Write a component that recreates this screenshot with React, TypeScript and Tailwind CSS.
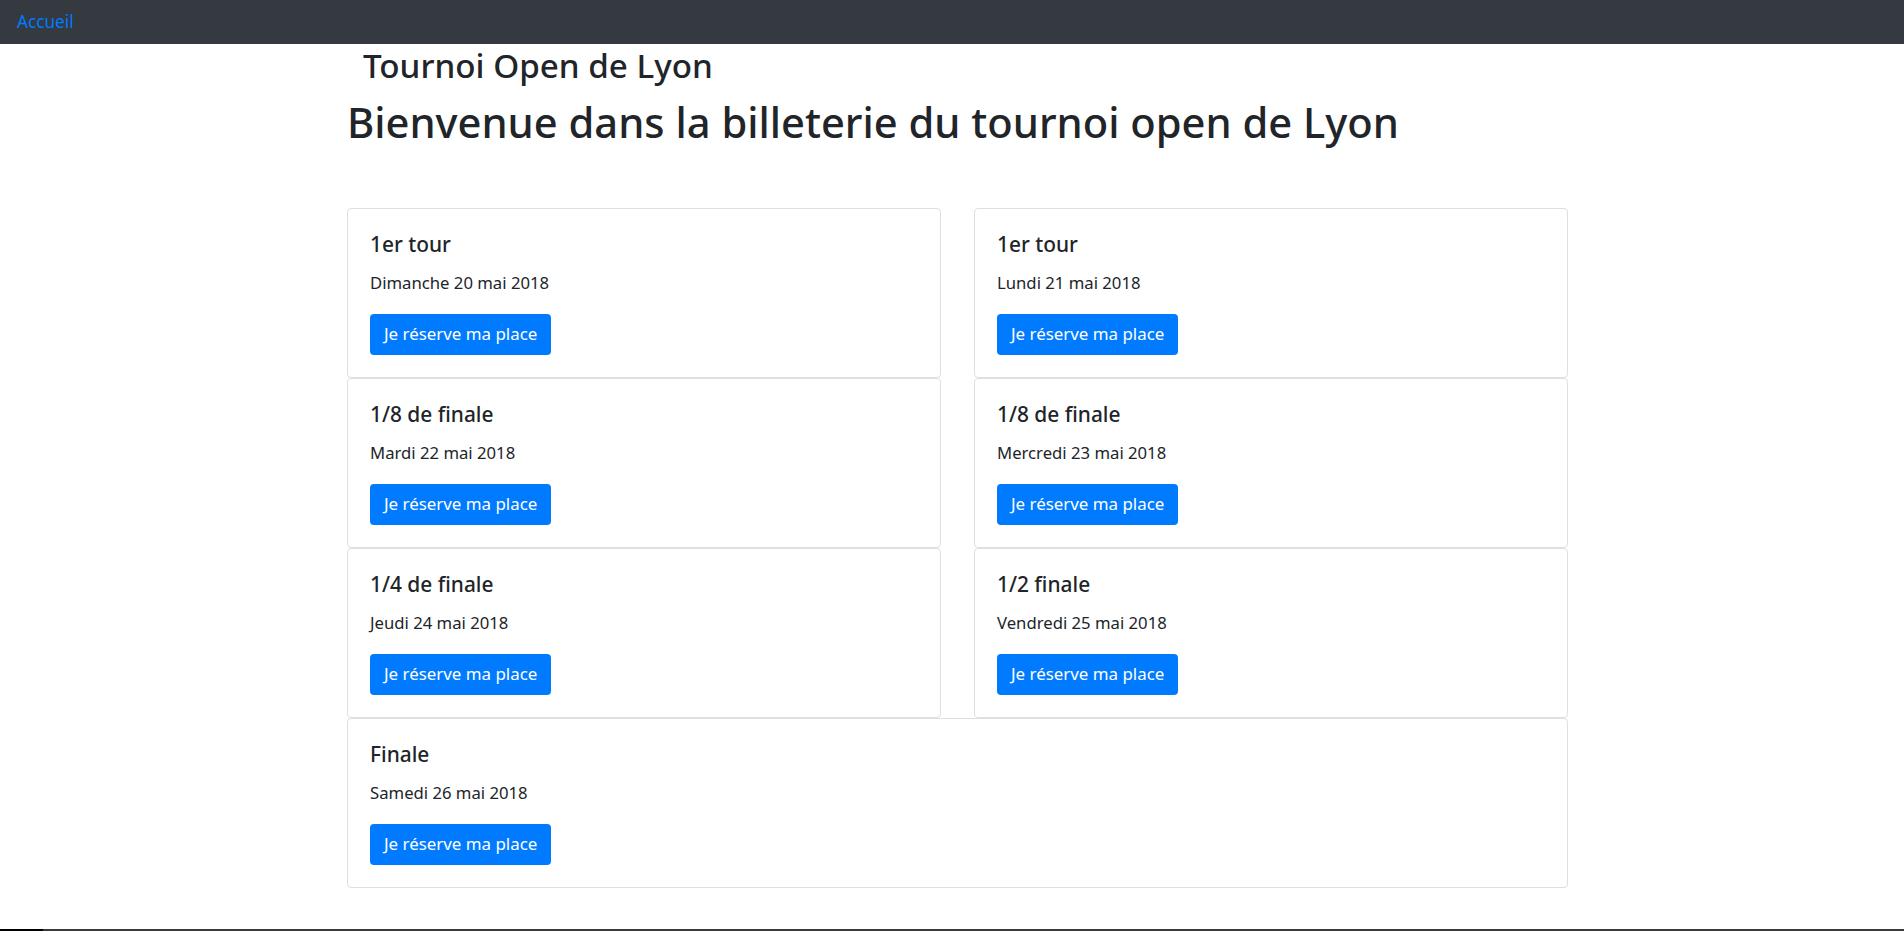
const FONT = "font-['Noto_Sans','Open_Sans',sans-serif]";

type Match = { title: string; date: string; full?: boolean };

const matches: Match[] = [
  { title: "1er tour", date: "Dimanche 20 mai 2018" },
  { title: "1er tour", date: "Lundi 21 mai 2018" },
  { title: "1/8 de finale", date: "Mardi 22 mai 2018" },
  { title: "1/8 de finale", date: "Mercredi 23 mai 2018" },
  { title: "1/4 de finale", date: "Jeudi 24 mai 2018" },
  { title: "1/2 finale", date: "Vendredi 25 mai 2018" },
  { title: "Finale", date: "Samedi 26 mai 2018", full: true },
];

function Card({ m }: { m: Match }) {
  return (
    <div
      className={`${m.full ? "col-span-2" : ""} border border-[#dfdfdf] rounded-[4px] bg-white p-[22px]`}
    >
      <h5 className="text-[20.9px] leading-[26.4px] font-medium text-[#212529] mb-[12.6px]">{m.title}</h5>
      <p className="text-[16.7px] leading-[26.4px] text-[#212529] mb-[17.6px]">{m.date}</p>
      <button className="h-[41px] px-[14px] rounded-[4px] bg-[#007bff] text-white text-[16.9px] leading-[24px]">
        Je réserve ma place
      </button>
    </div>
  );
}

export default function App() {
  return (
    <div className={`${FONT} min-h-[931px] flex flex-col bg-white`}>
      <nav className="h-[44px] bg-[#343a40] flex items-center px-[17px]">
        <a className="text-[#007bff] text-[17.2px]" href="#">
          Accueil
        </a>
      </nav>
      <main className="ml-[347px] w-[1221px]">
        <div className="mt-[2px] pl-[16px] text-[33.2px] leading-[40px] font-medium text-[#212529]">
          Tournoi Open de Lyon
        </div>
        <h1 className="mt-[10px] text-[41.7px] leading-[52.8px] font-medium text-[#212529]">
          Bienvenue dans la billeterie du tournoi open de Lyon
        </h1>
        <div className="mt-[59px] grid grid-cols-2 gap-x-[33px]">
          {matches.map((m, i) => (
            <Card key={i} m={m} />
          ))}
        </div>
      </main>
      <div className="mt-auto h-[2px] flex">
        <div className="w-[43px] bg-black" />
        <div className="flex-1 bg-[#3a3a3a]" />
      </div>
    </div>
  );
}
